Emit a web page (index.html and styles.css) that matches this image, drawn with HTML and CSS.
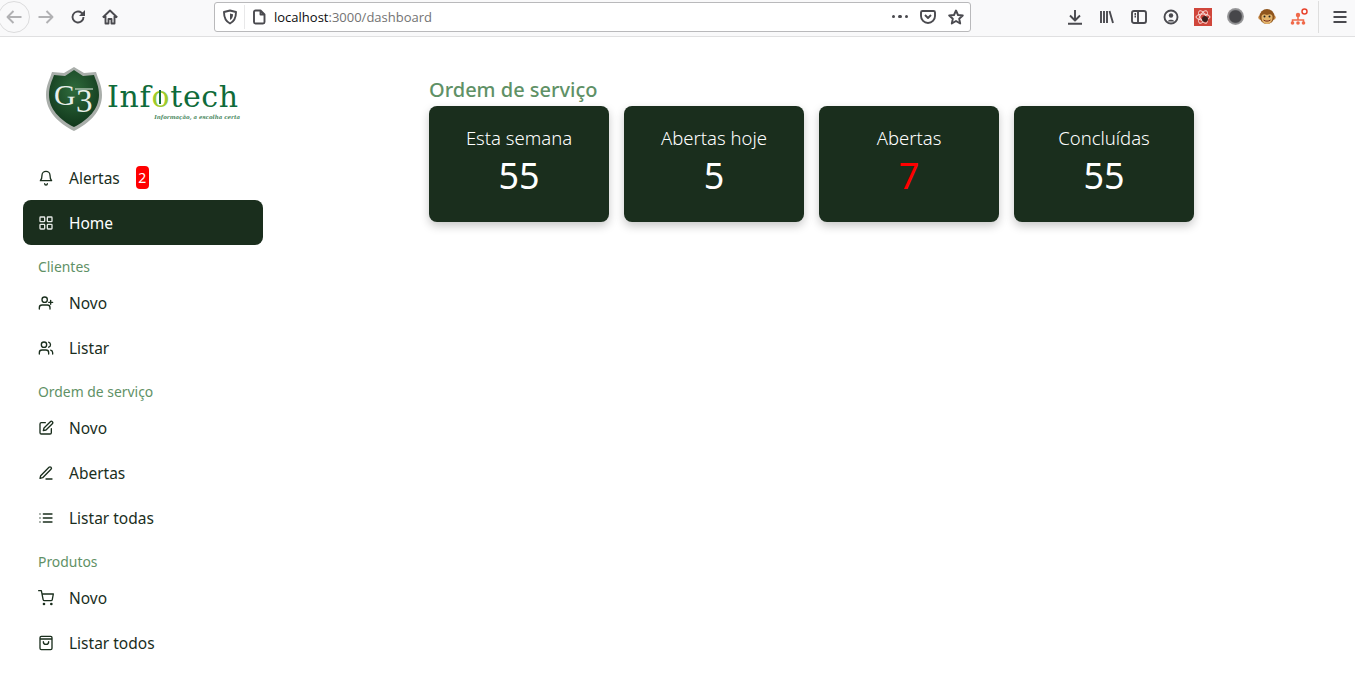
FILE: index.html
```html
<!DOCTYPE html>
<html lang="pt-BR">
<head>
    <meta charset="UTF-8">
    <title>Dashboard</title>
    <link rel="stylesheet" href="styles.css">
</head>
<body>
    <header class="toolbar">
        <button class="tool back"><svg viewBox="0 0 16 16" class="ico light"><path d="M15.500 8H1.500M7.500 2 1.500 8l6 6"/></svg></button>
        <button class="tool"><svg viewBox="0 0 16 16" class="ico light"><path d="M.5 8h14M8.500 2l6 6-6 6"/></svg></button>
        <button class="tool"><svg viewBox="0 0 16 16" class="ico"><path d="M13.500 8A5.500 5.500 0 1 1 11.500 3.800L14 6"/><path d="M15 1V7H9z" class="fill"/></svg></button>
        <button class="tool"><svg viewBox="0 0 16 16" class="ico"><path d="M.8 8.500 8 1.500l7.200 7M3.500 7v7.500h3V10h3v4.500h3V7"/></svg></button>

        <div class="urlbar">
            <svg viewBox="0 0 16 16" class="ico url-shield"><path d="M8 1.500 14 3c0 5-1 9-6 11.500C3 12 2 8 2 3z"/><path d="M8 4.500 11 5.300c0 2.500-.7 4.500-3 5.700z" class="fill"/></svg>
            <span class="url-divider"></span>
            <svg viewBox="0 0 16 16" class="ico url-doc"><path d="M3 3a1.500 1.500 0 0 1 1.500-1.500H9.500L13.500 5.500V13a1.500 1.500 0 0 1-1.500 1.500H4.500A1.500 1.500 0 0 1 3 13zM9.500 1.500v4h4"/></svg>
            <span class="url-text">localhost<span class="url-muted">:3000/dashboard</span></span>
            <span class="url-actions">
                <span class="url-dots"><i></i><i></i><i></i></span>
                <svg viewBox="0 0 16 16" class="ico"><path d="M2.500 2h11A1.500 1.500 0 0 1 15 3.500V7a7 7 0 0 1-14 0V3.500A1.500 1.500 0 0 1 2.500 2z"/><path d="M5 6l3 3 3-3"/></svg>
                <svg viewBox="0 0 16 16" class="ico"><path d="M8 1.500 10 6l4.800.5-3.600 3.200 1 4.800L8 12l-4.200 2.500 1-4.800L1.200 6.500 6 6z"/></svg>
            </span>
        </div>

        <div class="tools-right">
            <button class="tool"><svg viewBox="0 0 16 16" class="ico"><path d="M8 1v10M3 6.500 8 11.500l5-5M1 14.800h14"/></svg></button>
            <button class="tool"><svg viewBox="0 0 16 16" class="ico"><path d="M2 2v12M5 2v12M8 2v12M10.500 2l3.500 12"/></svg></button>
            <button class="tool"><svg viewBox="0 0 16 16" class="ico"><rect x="1" y="2" width="14" height="12" rx="2"/><path d="M7 2v12M3.500 5H5M3.500 7.500H5"/></svg></button>
            <button class="tool"><svg viewBox="0 0 16 16" class="ico"><circle cx="8" cy="8" r="6.500"/><circle cx="8" cy="6.500" r="2.200" class="fill"/><path d="M4.500 12.500c1-2.500 6-2.500 7 0" class="fill"/></svg></button>
            <button class="tool"><svg viewBox="0 0 18 18" class="ext"><rect width="18" height="18" fill="#d0463b"/><g fill="none" stroke="#f6d8d4"><ellipse cx="9" cy="9" rx="7" ry="3"/><ellipse cx="9" cy="9" rx="7" ry="3" transform="rotate(60 9 9)"/><ellipse cx="9" cy="9" rx="7" ry="3" transform="rotate(120 9 9)"/></g><circle cx="11" cy="11" r="3" fill="#3a1f1c"/></svg></button>
            <button class="tool"><span class="ext-dot"></span></button>
            <button class="tool"><svg viewBox="0 0 18 18" class="ext"><circle cx="2.500" cy="9.500" r="2.200" fill="#c98a45"/><circle cx="15.500" cy="9.500" r="2.200" fill="#c98a45"/><circle cx="9" cy="8.500" r="7.500" fill="#8f551d"/><path d="M3.500 9c0-3 2.500-3.500 5.500-2 3-1.500 5.500-1 5.500 2 0 4-2 7-5.500 7s-5.500-3-5.500-7z" fill="#e2b36b"/><circle cx="6.500" cy="8.500" r="1" fill="#222"/><circle cx="11.500" cy="8.500" r="1" fill="#222"/><path d="M5.500 12c2 1.500 5 1.500 7 0" stroke="#7a2c1c" fill="none"/></svg></button>
            <button class="tool"><svg viewBox="0 0 18 18" class="ext"><g fill="none" stroke="#f0694a" stroke-width="1.500"><path d="M8 7v5M2.500 15v-3h11v3"/></g><circle cx="8" cy="7" r="2.200" fill="#f0694a"/><circle cx="2.500" cy="15" r="1.800" fill="#f0694a"/><circle cx="8" cy="15" r="1.800" fill="#f0694a"/><circle cx="13.500" cy="15" r="1.800" fill="#f0694a"/><circle cx="14.500" cy="3.500" r="2.500" fill="#fff" stroke="#e8442e" stroke-width="1.500"/></svg></button>
            <span class="tool-divider"></span>
            <button class="tool"><svg viewBox="0 0 16 16" class="ico"><path d="M1.500 3h13M1.500 8h13M1.500 13h13"/></svg></button>
        </div>
    </header>

    <div class="app">
        <aside class="sidebar">
            <div class="logo">
                <svg class="logo-shield" viewBox="0 0 56 64">
                    <defs>
                        <radialGradient id="shieldGreen" cx=".5" cy=".35" r=".7">
                            <stop offset="0" stop-color="#2f6b3c"/>
                            <stop offset="1" stop-color="#0e3319"/>
                        </radialGradient>
                    </defs>
                    <path d="M28 0 38 6 50 5C52 12 56 18 56 28 56 44 44 56 28 64 12 56 0 44 0 28 0 18 4 12 6 5L18 6z" fill="#a9aeaa"/>
                    <path d="M28 3 37 9 48 8C50 14 53 19 53 28 53 42 42 53 28 60 14 53 3 42 3 28 3 19 6 14 8 8L19 9z" fill="url(#shieldGreen)"/>
                    <text x="8" y="38" class="logo-g">G</text>
                    <path d="M29 22h18" stroke="#e8eee9" fill="none"/>
                    <text x="30" y="45" class="logo-3">3</text>
                </svg>
                <div class="logo-words">
                    <div class="logo-name">Inf<span class="logo-power">o</span>tech</div>
                    <div class="logo-tag">Informação, a escolha certa</div>
                </div>
            </div>

            <nav class="menu">
                <a class="item">
                    <svg viewBox="0 0 24 24" class="nav-ico"><path d="M6 8a6 6 0 0 1 12 0c0 6 2.500 8 2.500 8h-17S6 14 6 8M10 20.500a2 2 0 0 0 4 0"/></svg>
                    <span>Alertas</span><span class="badge">2</span>
                </a>
                <a class="item active">
                    <svg viewBox="0 0 24 24" class="nav-ico"><rect x="3" y="3" width="7" height="7" rx="1"/><rect x="14" y="3" width="7" height="7" rx="1"/><rect x="3" y="14" width="7" height="7" rx="1"/><rect x="14" y="14" width="7" height="7" rx="1"/></svg>
                    <span>Home</span>
                </a>

                <div class="section">Clientes</div>
                <a class="item">
                    <svg viewBox="0 0 24 24" class="nav-ico"><circle cx="10" cy="7" r="4"/><path d="M2 21v-2a4 4 0 0 1 4-4h8a4 4 0 0 1 4 4v2M19 8v6M16 11h6"/></svg>
                    <span>Novo</span>
                </a>
                <a class="item">
                    <svg viewBox="0 0 24 24" class="nav-ico"><circle cx="9" cy="7" r="4"/><path d="M2 21v-2a4 4 0 0 1 4-4h6a4 4 0 0 1 4 4v2M16 3.200a4 4 0 0 1 0 7.600M22 21v-2a4 4 0 0 0-3-3.800"/></svg>
                    <span>Listar</span>
                </a>

                <div class="section">Ordem de serviço</div>
                <a class="item">
                    <svg viewBox="0 0 24 24" class="nav-ico"><path d="M11 4H5a2 2 0 0 0-2 2v13a2 2 0 0 0 2 2h13a2 2 0 0 0 2-2v-6"/><path d="M18.500 2.500a2.100 2.100 0 0 1 3 3L12 15l-4 1 1-4z"/></svg>
                    <span>Novo</span>
                </a>
                <a class="item">
                    <svg viewBox="0 0 24 24" class="nav-ico"><path d="M12 21h9M16.500 3.500a2.100 2.100 0 0 1 3 3L7 19l-4 1 1-4z"/></svg>
                    <span>Abertas</span>
                </a>
                <a class="item">
                    <svg viewBox="0 0 24 24" class="nav-ico"><path d="M8 6h13M8 12h13M8 18h13M3 6h.01M3 12h.01M3 18h.01"/></svg>
                    <span>Listar todas</span>
                </a>

                <div class="section">Produtos</div>
                <a class="item">
                    <svg viewBox="0 0 24 24" class="nav-ico"><circle cx="9" cy="21" r="1"/><circle cx="20" cy="21" r="1"/><path d="M1 1h4l2.700 13.400a2 2 0 0 0 2 1.600h9.700a2 2 0 0 0 2-1.600L23 6H6"/></svg>
                    <span>Novo</span>
                </a>
                <a class="item">
                    <svg viewBox="0 0 24 24" class="nav-ico"><path d="M5 2h14a2 2 0 0 1 2 2v16a2 2 0 0 1-2 2H5a2 2 0 0 1-2-2V4a2 2 0 0 1 2-2zM3 6h18M16 10a4 4 0 0 1-8 0"/></svg>
                    <span>Listar todos</span>
                </a>
            </nav>
        </aside>

        <main class="content">
            <h1 class="title">Ordem de serviço</h1>
            <div class="cards">
                <div class="card">
                    <div class="card-label">Esta semana</div>
                    <div class="card-value">55</div>
                </div>
                <div class="card">
                    <div class="card-label">Abertas hoje</div>
                    <div class="card-value">5</div>
                </div>
                <div class="card">
                    <div class="card-label">Abertas</div>
                    <div class="card-value alert">7</div>
                </div>
                <div class="card">
                    <div class="card-label">Concluídas</div>
                    <div class="card-value">55</div>
                </div>
            </div>
        </main>
    </div>
</body>
</html>
```

FILE: styles.css
```css
* {
    box-sizing: border-box;
}
html, body {
    height: 100%;
}
body {
    margin: 0;
    background: #fff;
    color: #1a2e1d;
    font-family: "Noto Sans", "Open Sans", sans-serif;
    overflow: hidden;
}

/* browser bar */
.toolbar {
    display: flex;
    align-items: center;
    height: 37px;
    padding: 0 0 3px 0;
    margin-left: -2px;
    background: #f9f9fa;
    border-bottom: 1px solid #e0e0e1;
}
.tool {
    display: flex;
    align-items: center;
    justify-content: center;
    width: 32px;
    height: 32px;
    padding: 0;
    border: none;
    background: none;
    flex: none;
}
.tool.back {
    border: 1px solid #dcdcdd;
    border-radius: 50%;
}
.ico {
    width: 16px;
    height: 16px;
    fill: none;
    stroke: #4a4a4f;
    stroke-width: 1.900;
    stroke-linejoin: round;
}
.ico.light {
    stroke: #b1b1b3;
}
.ico .fill {
    fill: #4a4a4f;
    stroke: none;
}
.ext {
    width: 18px;
    height: 18px;
}
.ext-dot {
    width: 17px;
    height: 17px;
    border-radius: 50%;
    background: radial-gradient(circle, #47474a 48%, #8e8e90 58%, #b5b5b6 85%, #d5d5d6 100%);
}
.urlbar {
    display: flex;
    align-items: center;
    width: 757px;
    height: 30px;
    margin-left: 88px;
    padding: 0 6px 0 7px;
    background: #fff;
    border: 1px solid #b9b9bb;
    border-radius: 3px;
    flex: none;
}
.url-divider {
    width: 1px;
    height: 24px;
    margin: 0 6px 0 6px;
    background: #e8e8e9;
}
.url-doc {
    flex: none;
}
.url-text {
    margin-left: 7px;
    font-family: "Open Sans", sans-serif;
    font-size: 13px;
    color: #0c0c0d;
}
.url-muted {
    color: #737373;
}
.url-actions {
    display: flex;
    align-items: center;
    gap: 12px;
    margin-left: auto;
}
.url-dots {
    display: flex;
    gap: 3px;
    width: 16px;
}
.url-dots i {
    width: 3.500px;
    height: 3.500px;
    border-radius: 50%;
    background: #4a4a4f;
}
.tools-right {
    display: flex;
    align-items: center;
    margin-left: 88px;
}
.tool-divider {
    width: 1px;
    height: 32px;
    margin: 0 5px 0 3px;
    background: #dedede;
    flex: none;
}

/* page */
.app {
    display: flex;
}
.sidebar {
    width: 240px;
    margin-left: 23px;
    flex: none;
}
.logo {
    display: flex;
    align-items: flex-start;
    gap: 5px;
    height: 118px;
    padding: 30px 0 0 23px;
}
.logo-shield {
    width: 56px;
    height: 64px;
    flex: none;
}
.logo-g {
    font-family: "Liberation Serif", serif;
    font-size: 30px;
    fill: #e8eee9;
}
.logo-3 {
    font-family: "Liberation Serif", serif;
    font-size: 33px;
    fill: #e8eee9;
}
.logo-words {
    width: 134px;
    padding-top: 10px;
    font-family: "DejaVu Serif", serif;
}
.logo-name {
    font-size: 30px;
    line-height: 40px;
    letter-spacing: .7px;
    white-space: nowrap;
    color: #0f6b3a;
}
.logo-power {
    position: relative;
    color: #9ccb2c;
}
.logo-power::after {
    content: "";
    position: absolute;
    left: 8px;
    top: 11px;
    width: 2px;
    height: 14px;
    background: #0f6b3a;
}
.logo-tag {
    margin-top: -4px;
    padding-right: 1px;
    font-size: 5.500px;
    line-height: 9px;
    font-style: italic;
    font-weight: bold;
    white-space: nowrap;
    text-align: right;
    color: #4d8a63;
}
.menu {
    display: flex;
    flex-direction: column;
}
.item {
    display: flex;
    align-items: center;
    height: 45px;
    padding-left: 15px;
    font-size: 15.500px;
    color: #1a2e1d;
    border-radius: 8px;
}
.item.active {
    background: #1a2e1d;
    color: #fff;
}
.nav-ico {
    width: 16px;
    height: 16px;
    margin-right: 15px;
    fill: none;
    stroke: #1a2e1d;
    stroke-width: 2;
    stroke-linecap: round;
    stroke-linejoin: round;
    flex: none;
}
.active .nav-ico {
    stroke: #e6e9e6;
}
.badge {
    display: flex;
    align-items: center;
    justify-content: center;
    width: 13px;
    height: 23px;
    margin-left: 16px;
    font-size: 14px;
    color: #fff;
    background: #f00;
    border-radius: 4px;
}
.section {
    height: 35px;
    padding: 13px 0 0 15px;
    font-size: 13.900px;
    line-height: 18px;
    color: #5f9166;
}
.content {
    margin-left: 166px;
    padding-top: 39px;
}
.title {
    margin: 0;
    height: 30px;
    font-size: 20px;
    line-height: 27px;
    font-weight: 500;
    color: #5f9166;
}
.cards {
    display: flex;
    gap: 15px;
}
.card {
    width: 180px;
    height: 116px;
    padding-top: 19px;
    text-align: center;
    color: #fff;
    background: #1a2e1d;
    border-radius: 8px;
    box-shadow: 0 4px 10px rgba(0, 0, 0, .22);
}
.card-label {
    font-size: 18.500px;
    line-height: 26px;
    font-weight: 300;
}
.card-value {
    font-size: 36px;
    line-height: 50px;
}
.card-value.alert {
    color: #f00;
}
```
